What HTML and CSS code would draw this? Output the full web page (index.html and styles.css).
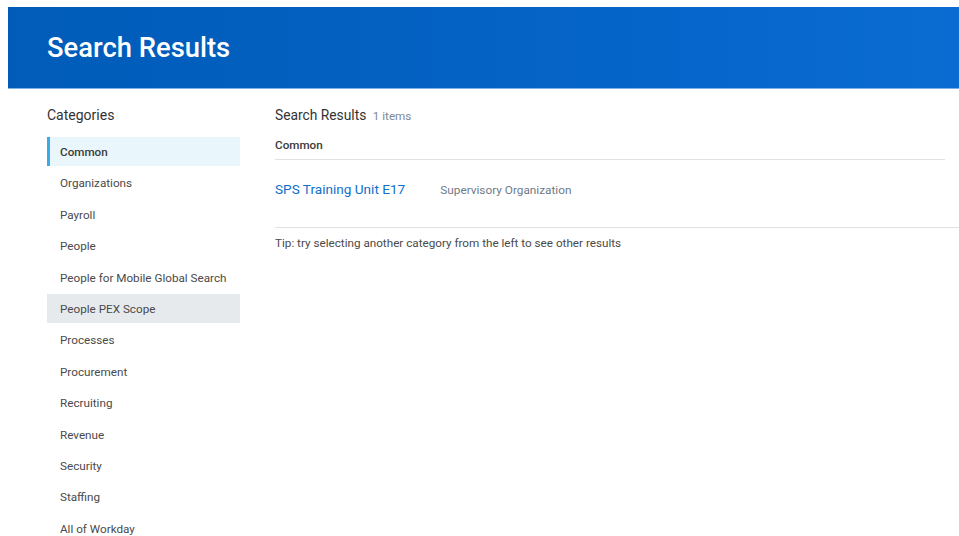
FILE: index.html
```html
<!DOCTYPE html>
<html lang="en">
<head>
<meta charset="utf-8">
<title>Search Results</title>
<link rel="stylesheet" href="styles.css">
</head>
<body>
<div class="page">
  <header class="banner">
    <h1 class="banner-title">Search Results</h1>
  </header>
  <div class="content">
    <aside class="sidebar">
      <h2 class="sidebar-title">Categories</h2>
      <ul class="cat-list">
        <li class="cat cat-active">Common</li>
        <li class="cat">Organizations</li>
        <li class="cat">Payroll</li>
        <li class="cat">People</li>
        <li class="cat">People for Mobile Global Search</li>
        <li class="cat cat-hover">People PEX Scope</li>
        <li class="cat">Processes</li>
        <li class="cat">Procurement</li>
        <li class="cat">Recruiting</li>
        <li class="cat">Revenue</li>
        <li class="cat">Security</li>
        <li class="cat">Staffing</li>
        <li class="cat">All of Workday</li>
      </ul>
    </aside>
    <main class="results">
      <h2 class="results-title">Search Results <span class="results-count">1 items</span></h2>
      <div class="group-head">Common</div>
      <div class="result-row">
        <a class="result-link" href="#">SPS Training Unit E17</a>
        <span class="result-type">Supervisory Organization</span>
      </div>
      <p class="tip">Tip: try selecting another category from the left to see other results</p>
    </main>
  </div>
</div>
</body>
</html>
```

FILE: styles.css
```css
* { box-sizing: border-box; }

html, body {
  margin: 0;
  padding: 0;
  background: #fff;
  font-family: Roboto, "Liberation Sans", Arial, sans-serif;
  color: #333;
}

.page {
  padding: 7px 0 0 8px;
}

.banner {
  height: 82px;
  background: linear-gradient(90deg, #005cb8 0%, #0462c4 50%, #0a6bd2 100%);
  border-bottom: 1px solid #7fb0e4;
  display: flex;
  align-items: center;
  padding-left: 39px;
}

.banner-title {
  margin: 0;
  color: #fff;
  font-size: 27.4px;
  font-weight: 500;
  line-height: 32px;
}

.content {
  display: flex;
  gap: 35px;
  padding: 16px 0 0 39px;
}

.sidebar {
  width: 193px;
  flex: none;
}

.sidebar-title {
  margin: 0 0 12px;
  font-size: 14px;
  font-weight: 400;
  line-height: 20px;
  color: #333;
}

.cat-list {
  list-style: none;
  margin: 0;
  padding: 0;
}

.cat {
  height: 29px;
  margin-bottom: 2.4px;
  padding: 1px 0 0 13px;
  display: flex;
  align-items: center;
  font-size: 11.7px;
  color: #4a4a4a;
}

.cat-active {
  background: #e9f6fc;
  box-shadow: inset 3px 0 0 #3ba9ea;
  color: #3a3a3a;
  font-weight: 500;
}

.cat-hover {
  background: #e6eaed;
}

.results {
  flex: 1;
}

.results-title {
  margin: 0;
  font-size: 13.8px;
  font-weight: 400;
  line-height: 20px;
  color: #333;
}

.results-count {
  margin-left: 3px;
  font-size: 11.7px;
  color: #7b8894;
}

.group-head {
  margin: 11px 14px 0 0;
  padding-bottom: 6px;
  border-bottom: 1px solid #dfe2e5;
  font-size: 11.7px;
  font-weight: 500;
  line-height: 16px;
  color: #3a3a3a;
}

.result-row {
  display: flex;
  align-items: baseline;
  gap: 35px;
  padding: 19px 0 27px;
  border-bottom: 1px solid #dfe2e5;
  line-height: 20px;
}

.result-link {
  font-size: 13.6px;
  color: #0f6fc9;
  text-decoration: none;
}

.result-type {
  font-size: 11.8px;
  color: #6e7b87;
}

.tip {
  margin: 7px 0 0;
  font-size: 11.7px;
  line-height: 16px;
  color: #4a4a4a;
}
```
